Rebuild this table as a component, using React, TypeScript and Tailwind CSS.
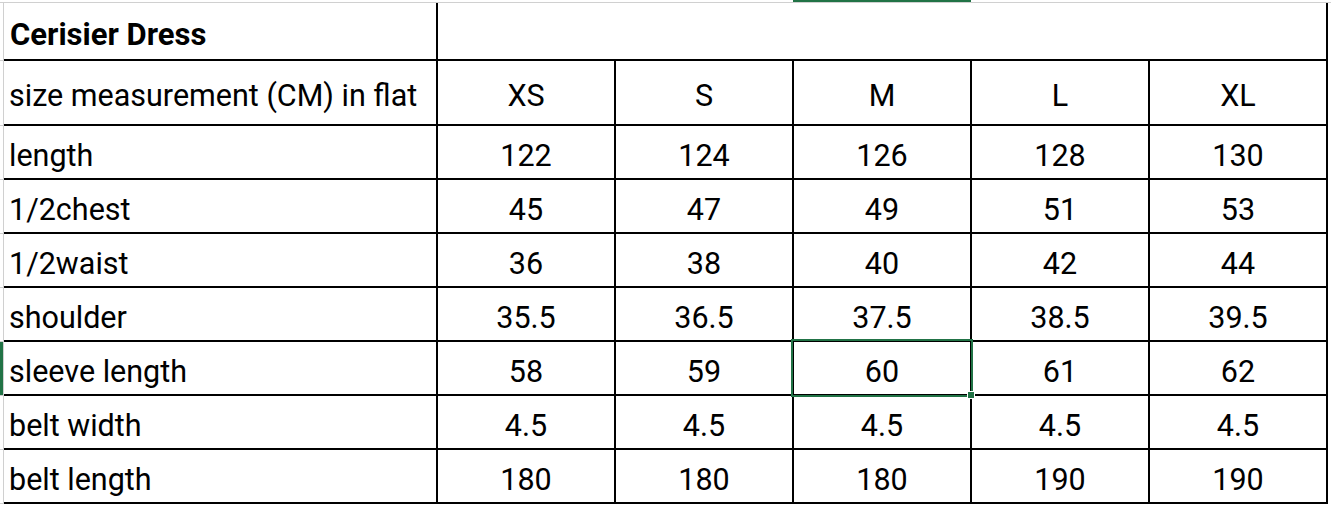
import React from "react";

type Row = { label: string; values: string[] };

const sizes = ["XS", "S", "M", "L", "XL"];

const rows: Row[] = [
  { label: "length", values: ["122", "124", "126", "128", "130"] },
  { label: "1/2chest", values: ["45", "47", "49", "51", "53"] },
  { label: "1/2waist", values: ["36", "38", "40", "42", "44"] },
  { label: "shoulder", values: ["35.5", "36.5", "37.5", "38.5", "39.5"] },
  { label: "sleeve length", values: ["58", "59", "60", "61", "62"] },
  { label: "belt width", values: ["4.5", "4.5", "4.5", "4.5", "4.5"] },
  { label: "belt length", values: ["180", "180", "180", "190", "190"] },
];

// heights include the 2px bottom border
const rowHeights = [58, 65, 54, 54, 54, 54, 54, 54, 54];

export default function App() {
  return (
    <div
      className="relative w-[1331px] h-[509px] overflow-hidden bg-white text-black"
      style={{ fontFamily: "Roboto, 'Noto Sans CJK SC', sans-serif" }}
    >
      {/* column header strip */}
      <div className="flex h-[3px] border-b border-[#d0d0d0]">
        <div className="w-[793px]" />
        <div className="w-[178px] bg-[#217346]" />
      </div>

      <div className="flex">
        {/* row header strip */}
        <div className="flex w-[4px] flex-col border-r border-[#d0d0d0]">
          {rowHeights.map((h, i) => (
            <div
              key={i}
              className={
                i === 6
                  ? "border-b border-[#d0d0d0] bg-[#217346]"
                  : "border-b border-[#d0d0d0]"
              }
              style={{ height: h }}
            />
          ))}
        </div>

        {/* sheet */}
        <div className="flex flex-col text-[30.5px] leading-none">
          <div className="flex h-[58px]">
            <div className="flex w-[434px] items-center border-r-2 border-b-2 border-black pl-[6px] pt-[6px] text-[31px] font-bold">
              Cerisier Dress
            </div>
            <div className="w-[890px] border-r-2 border-b-2 border-black" />
          </div>

          <div className="flex h-[65px]">
            <div className="flex w-[434px] items-center border-r-2 border-b-2 border-black pl-[5px] pt-[7px]">
              size measurement (CM) in flat
            </div>
            {sizes.map((s) => (
              <div
                key={s}
                className="flex w-[178px] items-center justify-center border-r-2 border-b-2 border-black pt-[7px]"
              >
                {s}
              </div>
            ))}
          </div>

          {rows.map((r) => (
            <div key={r.label} className="flex h-[54px]">
              <div className="flex w-[434px] items-center border-r-2 border-b-2 border-black pl-[5px] pt-[8px]">
                {r.label}
              </div>
              {r.values.map((v, i) => (
                <div
                  key={i}
                  className="flex w-[178px] items-center justify-center border-r-2 border-b-2 border-black pt-[8px]"
                >
                  {v}
                </div>
              ))}
            </div>
          ))}
        </div>
      </div>

      {/* active cell selection */}
      <div className="absolute left-[791px] top-[339px] h-[58px] w-[182px] border-[2.5px] border-[#217346]" />
      <div className="absolute left-[967px] top-[391px] h-[8px] w-[8px] border border-white bg-[#217346]" />
    </div>
  );
}
